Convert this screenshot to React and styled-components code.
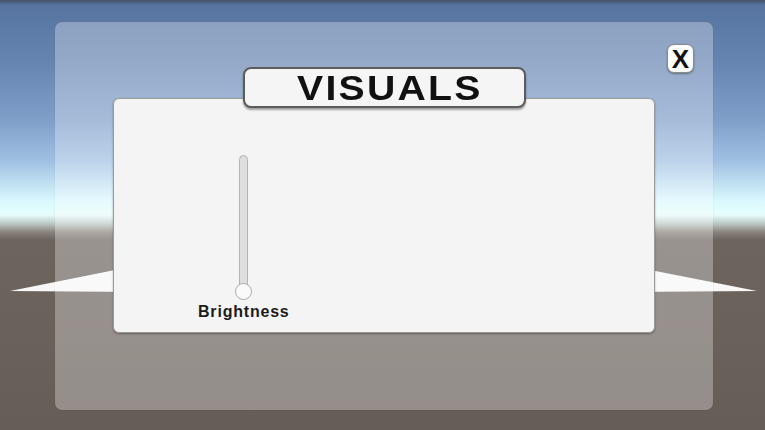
import React from "react";
import styled, { createGlobalStyle } from "styled-components";

const GlobalStyle = createGlobalStyle`
  html, body { margin: 0; padding: 0; overflow: hidden; }
  body { font-family: "Liberation Sans", Arial, sans-serif; }
`;

const Scene = styled.div`
  position: relative;
  width: 765px;
  height: 430px;
  box-sizing: border-box;
  padding: 22px 52px 20px 55px;
  display: flex;
  background: linear-gradient(
    to bottom,
    #46546c 0px,
    #4f6488 3px,
    #5774a0 5px,
    #6584b0 60px,
    #7f9fc9 120px,
    #9fbfe2 160px,
    #c2e2f2 185px,
    #dcf9ff 202px,
    #e6fdfb 215px,
    #b9c6c0 224px,
    #8a847e 232px,
    #6d645e 240px,
    #6a615b 330px,
    #665d57 430px
  );
`;

const GroundPlane = styled.svg`
  position: absolute;
  inset: 0;
  width: 765px;
  height: 430px;
  pointer-events: none;
`;

const Overlay = styled.div`
  position: relative;
  flex: 1;
  display: flex;
  flex-direction: column;
  padding: 45px 58px 77px;
  border-radius: 7px;
  background: rgba(255, 255, 255, 0.3);
  box-shadow: 0 0 1px rgba(0, 0, 0, 0.25);
`;

const CloseButton = styled.button`
  position: absolute;
  top: 22px;
  right: 19px;
  width: 27px;
  height: 29px;
  padding: 0;
  display: flex;
  align-items: center;
  justify-content: center;
  background: #fbfbfb;
  border: 1.5px solid #8a8a8a;
  border-radius: 7px;
  box-shadow: 0 1px 2px rgba(0, 0, 0, 0.35);
  font-family: "Liberation Sans", Arial, sans-serif;
  font-size: 26px;
  font-weight: 700;
  line-height: 1;
  color: #111;
  cursor: pointer;
`;

const Window = styled.div`
  flex: 1;
  display: flex;
  flex-direction: column;
`;

const TitleTab = styled.div`
  position: relative;
  z-index: 1;
  align-self: center;
  width: 283px;
  height: 41px;
  box-sizing: border-box;
  margin-bottom: -10px;
  padding-left: 12px;
  display: flex;
  align-items: center;
  justify-content: center;
  background: #f5f5f5;
  border: 2px solid #5c5c5c;
  border-radius: 8px;
  box-shadow: 0 2px 2px rgba(0, 0, 0, 0.35);
`;

const TitleText = styled.span`
  display: inline-block;
  transform: scaleX(1.12);
  font-family: "Liberation Sans", Arial, sans-serif;
  font-size: 35px;
  font-weight: 700;
  letter-spacing: 2px;
  color: #111;
`;

const Card = styled.div`
  flex: 1;
  display: flex;
  padding: 56px 0 0 84px;
  background: #f4f4f4;
  border: 1px solid #9a9a9a;
  border-radius: 6px;
  box-shadow: 0 1px 2px rgba(0, 0, 0, 0.35);
`;

const SliderGroup = styled.div`
  display: flex;
  flex-direction: column;
  align-items: center;
`;

const Track = styled.div`
  width: 9px;
  height: 137px;
  box-sizing: border-box;
  background: #dedede;
  border: 1.5px solid #b4b4b4;
  border-radius: 5px;
`;

const Handle = styled.div`
  width: 17px;
  height: 17px;
  box-sizing: border-box;
  margin-top: -9px;
  background: #fafafa;
  border: 1.5px solid #aaaaaa;
  border-radius: 50%;
`;

const SliderLabel = styled.div`
  margin-top: 3px;
  font-family: "Liberation Sans", Arial, sans-serif;
  font-size: 16px;
  font-weight: 700;
  letter-spacing: 0.8px;
  color: #1c1c1c;
`;

export default function App() {
  return (
    <>
      <GlobalStyle />
      <Scene>
        <GroundPlane viewBox="0 0 765 430">
          <defs>
            <filter id="soft" x="-5%" y="-50%" width="110%" height="200%">
              <feGaussianBlur stdDeviation="0.7" />
            </filter>
          </defs>
          <polygon points="10,291 140,265 140,292" fill="#f7f7f7" filter="url(#soft)" />
          <polygon points="625,265 757,291 625,292" fill="#f7f7f7" filter="url(#soft)" />
        </GroundPlane>
        <Overlay>
          <CloseButton aria-label="Close">X</CloseButton>
          <Window>
            <TitleTab>
              <TitleText>VISUALS</TitleText>
            </TitleTab>
            <Card>
              <SliderGroup>
                <Track />
                <Handle />
                <SliderLabel>Brightness</SliderLabel>
              </SliderGroup>
            </Card>
          </Window>
        </Overlay>
      </Scene>
    </>
  );
}
